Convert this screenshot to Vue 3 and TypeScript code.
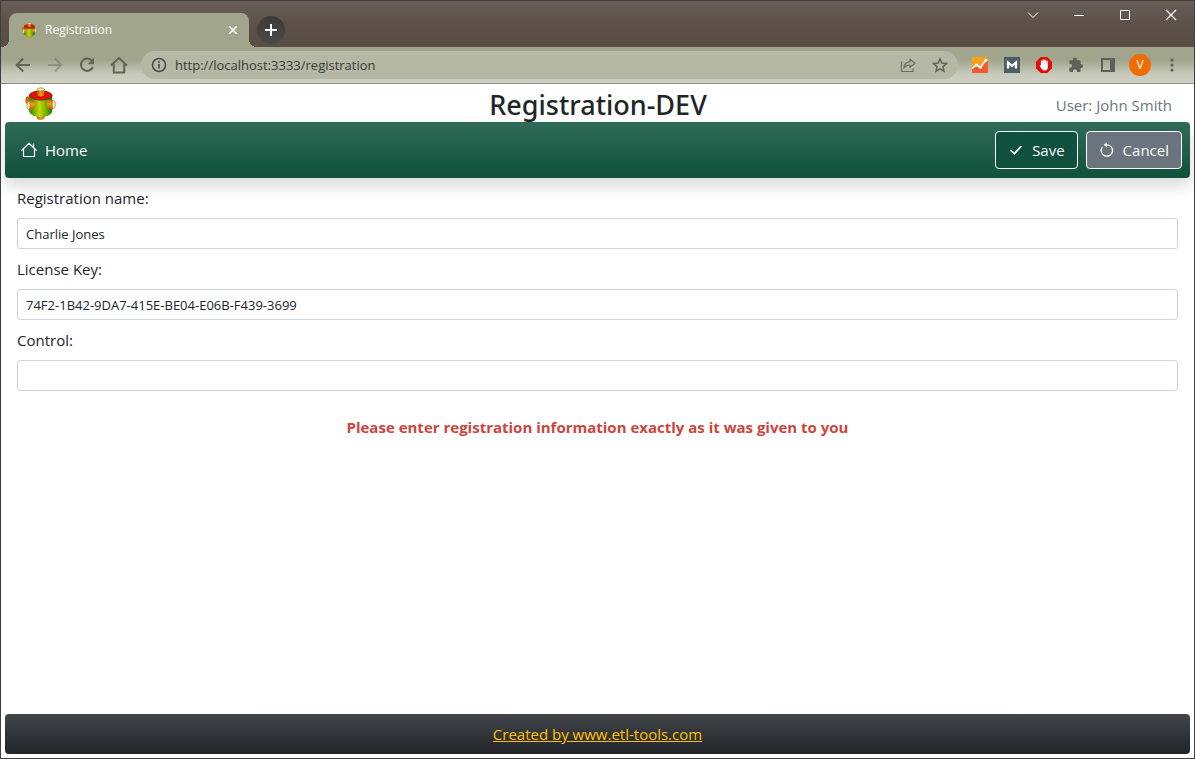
<script setup lang="ts">
import { ref } from 'vue'

const registrationName = ref<string>('Charlie Jones')
const licenseKey = ref<string>('74F2-1B42-9DA7-415E-BE04-E06B-F439-3699')
const control = ref<string>('')
const address = ref<string>('http://localhost:3333/registration')
</script>

<template>
  <div class="window">
    <svg class="defs" aria-hidden="true">
      <defs>
        <linearGradient id="barrel" x1="0" x2="1" y1="0" y2="0">
          <stop offset="0" stop-color="#2c8a08" />
          <stop offset=".25" stop-color="#7fb804" />
          <stop offset=".45" stop-color="#c9d803" />
          <stop offset=".7" stop-color="#7cb404" />
          <stop offset="1" stop-color="#1d7a0a" />
        </linearGradient>
        <linearGradient id="pipe" x1="0" x2="1" y1="0" y2="0">
          <stop offset="0" stop-color="#c8540c" />
          <stop offset=".5" stop-color="#ee9a20" />
          <stop offset="1" stop-color="#d4660c" />
        </linearGradient>
        <linearGradient id="port" x1="0" x2="0" y1="0" y2="1">
          <stop offset="0" stop-color="#d4640c" />
          <stop offset=".4" stop-color="#ee9a20" />
          <stop offset="1" stop-color="#c8540c" />
        </linearGradient>
        <symbol id="logo" viewBox="0 0 32 34">
          <path d="M12.800 28h7.800v4q-1 2-3.900 2t-3.900-2z" fill="url(#pipe)" />
          <ellipse cx="3.800" cy="14.200" rx="2.400" ry="4" fill="#d0680c" />
          <path d="M5.200 9.500V26q2.500 5 11.500 5t11.500-5V9.500z" fill="url(#barrel)" />
          <ellipse cx="16.700" cy="9.500" rx="11.500" ry="4.700" fill="#e01205" stroke="#3c3a10" stroke-width=".7" />
          <path d="M13.200 3.500h7v6q-3.500 1.800-7 0z" fill="url(#pipe)" />
          <ellipse cx="16.700" cy="3.400" rx="3.800" ry="1.500" fill="#fdf0b0" stroke="#9a7418" stroke-width=".7" />
          <path d="M4.500 14.500q3.500 0 6.500 1v6.500q-3 1.500-6.500 2z" fill="url(#port)" />
          <ellipse cx="4.500" cy="19.500" rx="1.600" ry="4" fill="#fdf0b0" stroke="#a4741c" stroke-width=".7" />
          <path d="M29 14q-3.500 0-6 1v6.500q3 1.500 6 2z" fill="url(#port)" />
          <ellipse cx="29.700" cy="18.500" rx="1.600" ry="4" fill="#fdf0b0" stroke="#a4741c" stroke-width=".7" />
        </symbol>
      </defs>
    </svg>

    <div class="titlebar">
      <div class="tab">
        <svg class="favicon" viewBox="0 0 32 34"><use href="#logo" /></svg>
        <span class="tab-title">Registration</span>
        <button class="tab-close" type="button" aria-label="Close tab">
          <svg width="16" height="16" viewBox="0 0 16 16"><path d="M4.200 4.200l7.600 7.600M11.800 4.200l-7.600 7.600" stroke="#fff" stroke-width="1.600" /></svg>
        </button>
      </div>
      <button class="new-tab" type="button" aria-label="New tab">
        <svg width="16" height="16" viewBox="0 0 16 16"><path d="M8 2v12M2 8h12" stroke="#fff" stroke-width="2" /></svg>
      </button>
      <div class="controls">
        <button type="button" aria-label="Search tabs">
          <svg width="12" height="12" viewBox="0 0 12 12"><path d="M1 3.500l5 5 5-5" /></svg>
        </button>
        <button type="button" aria-label="Minimize">
          <svg width="12" height="12" viewBox="0 0 12 12"><path d="M1 6.500h10" /></svg>
        </button>
        <button type="button" aria-label="Maximize">
          <svg width="12" height="12" viewBox="0 0 12 12"><path d="M1.500 1.500h9v9h-9z" /></svg>
        </button>
        <button type="button" aria-label="Close">
          <svg width="12" height="12" viewBox="0 0 12 12"><path d="M1 1l10 10M11 1L1 11" stroke-width="1.300" /></svg>
        </button>
      </div>
    </div>

    <div class="toolbar">
      <button type="button" aria-label="Back">
        <svg width="16" height="16" viewBox="0 0 16 16" class="line"><path d="M15 8H2M8.200 1.500L1.700 8l6.500 6.500" /></svg>
      </button>
      <button type="button" aria-label="Forward" class="dim">
        <svg width="16" height="16" viewBox="0 0 16 16" class="line"><path d="M1 8h13M7.800 1.500L14.300 8l-6.500 6.500" /></svg>
      </button>
      <button type="button" aria-label="Reload">
        <svg width="16" height="16" viewBox="0 0 16 16"><path d="M13 3.800A6.200 6.200 0 1 0 13.900 10" fill="none" stroke="#62645c" stroke-width="2" /><path d="M15 .8v6.400H8.600z" fill="#62645c" /></svg>
      </button>
      <button type="button" aria-label="Home">
        <svg width="18" height="18" viewBox="0 0 18 18" class="line"><path d="M1 9.500L9 2l8 7.500M3.800 8v8.500h10.400V8" /></svg>
      </button>
      <div class="omnibox">
        <svg width="16" height="16" viewBox="0 0 16 16"><circle cx="8" cy="8" r="6.500" fill="none" stroke="#4b4d4c" stroke-width="1.600" /><path d="M8 7v4.500M8 4.200v1.700" stroke="#4b4d4c" stroke-width="1.700" /></svg>
        <input v-model="address" class="address" type="text" aria-label="Address" />
        <button type="button" aria-label="Share">
          <svg width="16" height="16" viewBox="0 0 16 16"><path d="M1.500 4.500v10H13v-3M10 2.200l5 4-5 4V8Q6 8 3.800 11 4.500 5.200 10 4.700z" fill="none" stroke="#6a6c64" stroke-width="1.200" stroke-linejoin="round" /></svg>
        </button>
        <button type="button" aria-label="Bookmark">
          <svg width="16" height="16" viewBox="0 0 16 16"><path d="M8 1.800l1.800 4.300 4.700.4-3.500 3.100 1 4.600-4-2.400-4 2.400 1-4.600L1.500 6.500l4.700-.4z" fill="none" stroke="#62645c" stroke-width="1.500" /></svg>
        </button>
      </div>
      <button type="button" aria-label="Analytics">
        <svg width="16" height="16" viewBox="0 0 16 16"><rect width="16" height="16" rx="1" fill="#f9a01b" /><path d="M0 11l4.500-3.500 4 3L13 3l3 1v11q0 1-1 1H1q-1 0-1-1z" fill="#f4592c" /><path d="M0 11.300L4.500 8l4 2.500 5-7" fill="none" stroke="#fff" stroke-width="1.700" /><circle cx="4.500" cy="8" r="1.400" fill="#fff" /><circle cx="8.500" cy="10.500" r="1.400" fill="#fff" /><circle cx="13.800" cy="3.300" r="1.600" fill="#fff" /></svg>
      </button>
      <button type="button" aria-label="Mail">
        <svg width="16" height="16" viewBox="0 0 16 16"><rect width="16" height="16" fill="#4f5d64" /><path d="M4 11.500V5.500L8 9l4-3.500v6" fill="none" stroke="#fff" stroke-width="2.300" /></svg>
      </button>
      <button type="button" aria-label="Blocker">
        <svg width="16" height="16" viewBox="0 0 16 16"><path d="M4.700 0h6.600L16 4.700v6.600L11.300 16H4.700L0 11.300V4.700z" fill="#e40d0d" /><path d="M5.700 8V4.200M7.400 8V3.100M9.200 8V3.200M11 8V4.400" stroke="#fff" stroke-width="1.600" stroke-linecap="round" /><path d="M4.900 7h6.900v3q0 3.500-3 3.500-2 0-3-1.500L3.700 8.900q.5-1 1.200-.3z" fill="#fff" /></svg>
      </button>
      <button type="button" aria-label="Extensions">
        <svg width="16" height="16" viewBox="0 0 16 16"><path d="M13.200 7.200h-.6V4.500q0-1.300-1.300-1.300H8.800v-.8a1.900 1.900 0 0 0-3.800 0v.8H2.500q-1.200 0-1.200 1.300v2.300h.8a2 2 0 0 1 0 4h-.8v2.900q0 1.300 1.200 1.300H5v-.7a2 2 0 0 1 4 0v.7h2.300q1.300 0 1.300-1.300V11h.6a1.900 1.900 0 0 0 0-3.800z" fill="#5f605a" /></svg>
      </button>
      <button type="button" aria-label="Side panel">
        <svg width="14" height="14" viewBox="0 0 14 14"><path d="M1 1h12v12H1z" fill="none" stroke="#5f605a" stroke-width="2" /><path d="M9 0h5v14H9z" fill="#5f605a" /></svg>
      </button>
      <button type="button" aria-label="Profile"><span class="avatar">V</span></button>
      <button type="button" aria-label="Menu">
        <svg width="16" height="16" viewBox="0 0 16 16" fill="#5f605a"><circle cx="8" cy="3" r="1.600" /><circle cx="8" cy="8" r="1.600" /><circle cx="8" cy="13" r="1.600" /></svg>
      </button>
    </div>

    <div class="page">
      <header class="header">
        <svg class="logo" viewBox="0 0 32 34"><use href="#logo" /></svg>
        <h1>Registration-DEV</h1>
        <span class="user">User: John Smith</span>
      </header>

      <nav class="navbar">
        <a class="home" href="#">
          <svg width="16" height="16" viewBox="0 0 16 16" fill="none" stroke="#fff" stroke-width="1.200" stroke-linejoin="round" stroke-linecap="round"><path d="M.8 8.300L8 1.200l7.200 7.100M2.500 7v7.500h11V7M12.500 2v3" /></svg>
          Home
        </a>
        <button class="btn save" type="submit" form="registration">
          <svg width="16" height="16" viewBox="0 0 16 16"><path d="M3 8.500l3.300 3.200 6.500-7" fill="none" stroke="#fff" stroke-width="1.700" stroke-linecap="round" /></svg>
          Save
        </button>
        <button class="btn cancel" type="button">
          <svg width="16" height="16" viewBox="0 0 16 16"><path d="M7.500 2.800A5.700 5.700 0 1 1 3 5.500" fill="none" stroke="#fff" stroke-width="1.300" stroke-linecap="round" /><path d="M8 .3v5L4.500 2.800z" fill="#fff" /></svg>
          Cancel
        </button>
      </nav>

      <form id="registration" class="form" @submit.prevent>
        <label for="name">Registration name:</label>
        <input id="name" v-model="registrationName" type="text" />
        <label for="key">License Key:</label>
        <input id="key" v-model="licenseKey" type="text" />
        <label for="control">Control:</label>
        <input id="control" v-model="control" type="text" />
        <p class="notice">Please enter registration information exactly as it was given to you</p>
      </form>

      <footer class="footer">
        <a href="#">Created by www.etl-tools.com</a>
      </footer>
    </div>
  </div>
</template>

<style>
body {
  margin: 0;
}
</style>

<style scoped>
.window,
.window * {
  box-sizing: border-box;
}
.window {
  display: flex;
  flex-direction: column;
  min-height: 100vh;
  border: 1px solid #3f3f40;
  background: #fff;
  color: #212529;
  font: 15px/24px "Open Sans", "Noto Sans", sans-serif;
}
.defs {
  position: absolute;
  width: 0;
  height: 0;
}
button {
  display: flex;
  align-items: center;
  justify-content: center;
  padding: 0;
  border: 0;
  background: none;
  color: inherit;
  font: inherit;
}
svg {
  display: block;
  flex: none;
}
.titlebar {
  display: flex;
  align-items: flex-end;
  height: 46px;
  padding-left: 8px;
  background: linear-gradient(#6a5f59, #5c5048 50%, #584c43);
}
.tab {
  position: relative;
  display: flex;
  align-items: center;
  width: 240px;
  height: 34px;
  padding: 0 8px 0 12px;
  border-radius: 8px 8px 0 0;
  background: #a0a58b;
  color: #fff;
  font-size: 12px;
}
.tab::before,
.tab::after {
  content: "";
  position: absolute;
  bottom: 0;
  width: 8px;
  height: 8px;
}
.tab::before {
  right: 100%;
  background: radial-gradient(circle at 0 0, transparent 8px, #a0a58b 8px);
}
.tab::after {
  left: 100%;
  background: radial-gradient(circle at 100% 0, transparent 8px, #a0a58b 8px);
}
.favicon {
  width: 16px;
  height: 16px;
}
.tab-title {
  flex: 1;
  margin-left: 8px;
}
.new-tab {
  width: 28px;
  height: 28px;
  margin: 0 0 3px 8px;
  border-radius: 50%;
  background: linear-gradient(#3d3936, #4a4a49);
}
.controls {
  display: flex;
  align-self: flex-start;
  margin-left: auto;
}
.controls button {
  width: 46px;
  height: 28px;
}
.controls svg {
  fill: none;
  stroke: #fff;
}
.toolbar {
  display: flex;
  align-items: center;
  height: 37px;
  padding: 0 6px;
  border-bottom: 1px solid #8f907f;
  background: linear-gradient(#a0a58b 35%, #c7c9ba 75%, #d0d1c5);
}
.toolbar button {
  width: 32px;
  height: 28px;
}
.line {
  fill: none;
  stroke: #62645c;
  stroke-width: 2;
}
.dim {
  opacity: 0.4;
}
.omnibox {
  display: flex;
  flex: 1;
  align-items: center;
  height: 28px;
  margin: 0 6px;
  padding: 0 2px 0 10px;
  border-radius: 14px;
  background: #b4b8a5;
}
.address {
  flex: 1;
  min-width: 0;
  margin-left: 8px;
  padding: 0;
  border: 0;
  background: none;
  color: #3a3c38;
  font: 13px/20px "Open Sans", "Noto Sans", sans-serif;
}
.avatar {
  width: 22px;
  border-radius: 50%;
  background: #f06c00;
  color: #fff;
  font-size: 12px;
  line-height: 22px;
}
.page {
  display: flex;
  flex: 1;
  flex-direction: column;
  padding: 0 4px 4px;
}
.header {
  display: grid;
  grid-template-columns: 1fr auto 1fr;
  align-items: center;
  height: 38px;
  padding: 0 18px 0 19px;
}
.logo {
  width: 32px;
  height: 34px;
}
h1 {
  margin: 4px 0 0;
  font-family: "Noto Sans", "Open Sans", sans-serif;
  font-size: 27px;
  font-weight: 500;
  line-height: 34px;
}
.user {
  justify-self: end;
  margin-top: 4px;
  color: #6c757d;
}
.navbar {
  display: flex;
  align-items: center;
  gap: 8px;
  height: 56px;
  padding: 0 8px 0 16px;
  border-radius: 4px;
  background: linear-gradient(#306b58, #0f513c);
  box-shadow: 0 8px 16px rgba(0, 0, 0, 0.15);
  color: #fff;
}
.home {
  display: flex;
  align-items: center;
  gap: 8px;
  margin-right: auto;
  color: #fff;
  text-decoration: none;
}
.btn {
  gap: 8px;
  height: 38px;
  padding: 0 12px;
  border: 1px solid #fff;
  border-radius: 4px;
}
.save {
  background: #0f513c;
}
.cancel {
  background: #6c757d;
}
.form {
  display: flex;
  flex: 1;
  flex-direction: column;
  gap: 8px;
  padding: 8px 12px;
}
.form input {
  width: 100%;
  height: 31px;
  padding: 4px 8px;
  border: 1px solid #ced4da;
  border-radius: 3px;
  background: #fff;
  color: #212529;
  font: 13px/21px "Open Sans", "Noto Sans", sans-serif;
}
.notice {
  margin: 16px 0 0;
  color: #cc453e;
  font-weight: 700;
  text-align: center;
}
.footer {
  height: 40px;
  border-radius: 4px;
  background: linear-gradient(#424649, #212529);
  line-height: 40px;
  text-align: center;
}
.footer a {
  color: #ffc107;
}
</style>
